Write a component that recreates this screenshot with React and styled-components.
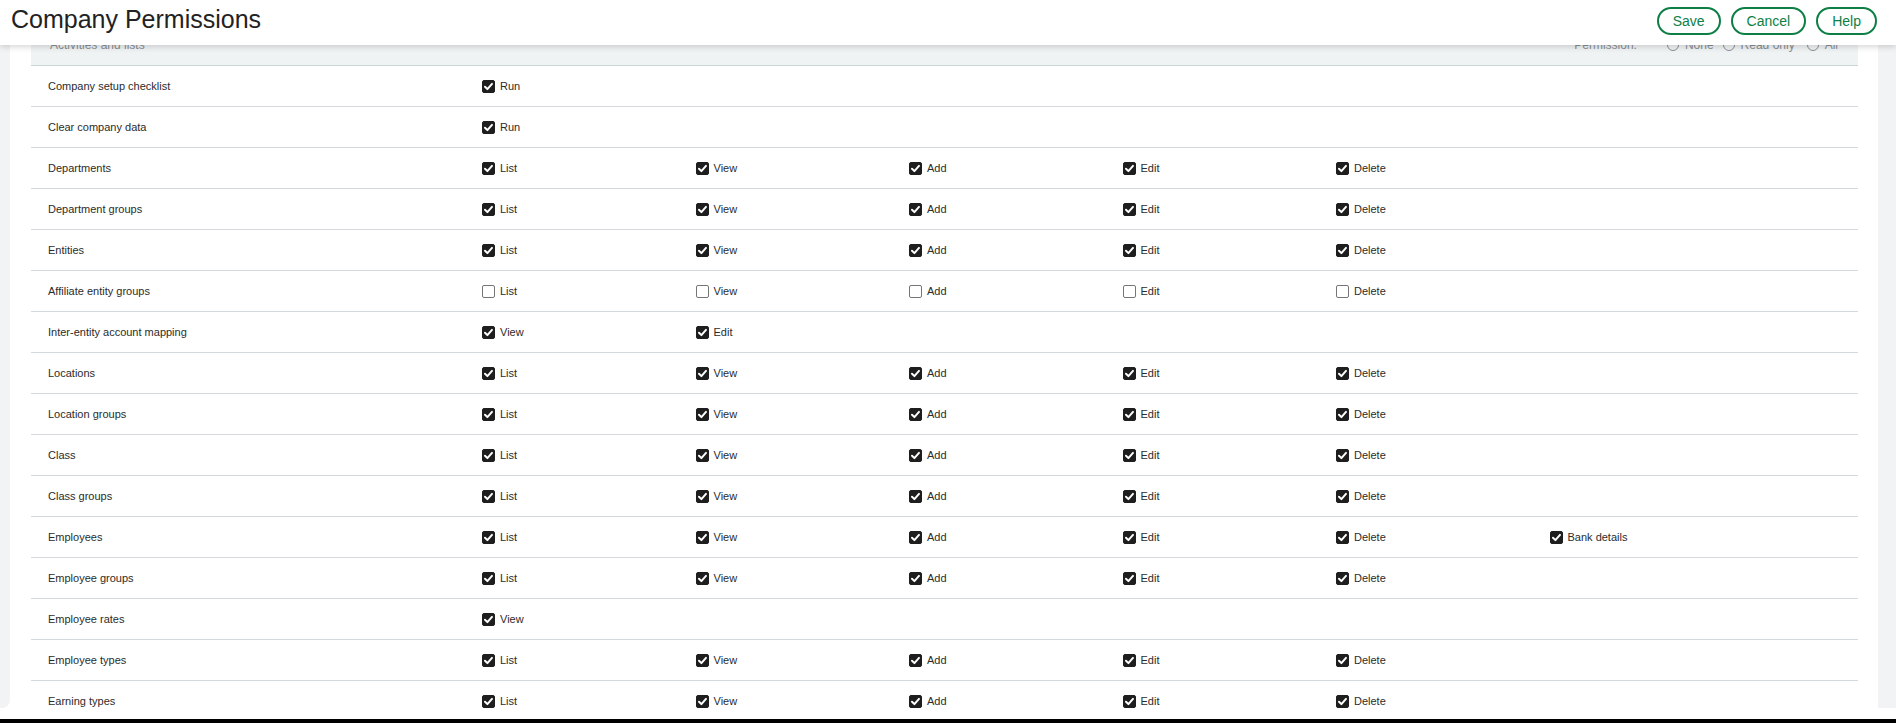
import React from 'react';
import styled, { createGlobalStyle } from 'styled-components';

const GlobalStyle = createGlobalStyle`
  html, body {
    margin: 0;
    padding: 0;
    background: #ffffff;
    font-family: "Liberation Sans", Arial, sans-serif;
  }
`;

const Page = styled.div`
  height: 723px;
  display: flex;
  flex-direction: column;
  overflow: hidden;
`;

const TopBar = styled.header`
  position: relative;
  z-index: 2;
  height: 45px;
  flex-shrink: 0;
  box-sizing: border-box;
  display: flex;
  justify-content: space-between;
  align-items: flex-start;
  padding: 7px 19px 0 11px;
  background: #ffffff;
  box-shadow: 0 2px 6px rgba(0, 0, 0, 0.16);
`;

const Title = styled.h1`
  margin: -2px 0 0;
  font-size: 25px;
  font-weight: 400;
  line-height: 28px;
  color: #222;
`;

const Actions = styled.div`
  display: flex;
  gap: 10px;
`;

const Button = styled.button`
  height: 28px;
  padding: 0 14px;
  border: 2px solid #0d7f45;
  border-radius: 16px;
  background: #ffffff;
  color: #0d7f45;
  font-family: inherit;
  font-size: 14px;
  cursor: pointer;
`;

const Body = styled.div`
  flex: 1;
  min-height: 0;
  display: flex;
  overflow: hidden;
`;

const Gutter = styled.div`
  width: ${(p) => p.w}px;
  height: 663px;
  flex-shrink: 0;
  background: #f1f3f4;
  border-bottom-right-radius: ${(p) => (p.rounded ? '8px' : '0')};
`;

const Card = styled.main`
  flex: 1;
  min-width: 0;
  padding: 0 20px 0 21px;
  overflow: hidden;
`;

const HeadRow = styled.div`
  margin-top: -20px;
  height: 41px;
  box-sizing: border-box;
  display: flex;
  align-items: center;
  justify-content: space-between;
  padding: 0 20px 0 19px;
  background: #f0f3f4;
  border-bottom: 1px solid #cdd4d8;
  color: #8a8f93;
  font-size: 12px;
`;

const HeadRight = styled.div`
  display: flex;
  align-items: center;
`;

const PermLabel = styled.span`
  margin-right: 30px;
`;

const Radio = styled.label`
  display: flex;
  align-items: center;
  gap: 6px;
  margin-left: ${(p) => p.gap || 0}px;
`;

const RadioDot = styled.span`
  width: 10px;
  height: 10px;
  border: 1px solid #8a8f93;
  border-radius: 50%;
`;

const Row = styled.div`
  display: grid;
  grid-template-columns: 434px repeat(6, 213.5px) 1fr;
  height: 41px;
  box-sizing: border-box;
  border-bottom: 1px solid #d3d9dd;
  align-items: center;
  font-size: 11px;
  color: #2b2b2b;
`;

const Name = styled.div`
  padding-left: 17px;
`;

const Perm = styled.label`
  display: flex;
  align-items: center;
  gap: 5px;
  padding-left: 17px;
`;

const Box = styled.span`
  width: 13px;
  height: 13px;
  box-sizing: border-box;
  flex-shrink: 0;
  border-radius: 2px;
  background: ${(p) => (p.on ? '#1e1e1e' : '#ffffff')};
  border: 1px solid ${(p) => (p.on ? '#1e1e1e' : '#767676')};
  display: flex;
  align-items: center;
  justify-content: center;
`;

const BottomEdge = styled.div`
  height: 4px;
  flex-shrink: 0;
  background: #000;
`;

const Check = ({ on }) => (
  <Box on={on}>
    {on && (
      <svg width="11" height="11" viewBox="0 0 11 11">
        <path d="M2 5.8 L4.4 8.1 L9 2.9" fill="none" stroke="#fff" strokeWidth="2" strokeLinecap="round" strokeLinejoin="round" />
      </svg>
    )}
  </Box>
);

const FULL = ['List', 'View', 'Add', 'Edit', 'Delete'];

const rows = [
  { name: 'Company setup checklist', perms: ['Run'] },
  { name: 'Clear company data', perms: ['Run'] },
  { name: 'Departments', perms: FULL },
  { name: 'Department groups', perms: FULL },
  { name: 'Entities', perms: FULL },
  { name: 'Affiliate entity groups', perms: FULL, off: true },
  { name: 'Inter-entity account mapping', perms: ['View', 'Edit'] },
  { name: 'Locations', perms: FULL },
  { name: 'Location groups', perms: FULL },
  { name: 'Class', perms: FULL },
  { name: 'Class groups', perms: FULL },
  { name: 'Employees', perms: [...FULL, 'Bank details'] },
  { name: 'Employee groups', perms: FULL },
  { name: 'Employee rates', perms: ['View'] },
  { name: 'Employee types', perms: FULL },
  { name: 'Earning types', perms: FULL },
];

const App = () => {
  return (
    <Page>
      <GlobalStyle />
      <TopBar>
        <Title>Company Permissions</Title>
        <Actions>
          <Button>Save</Button>
          <Button>Cancel</Button>
          <Button>Help</Button>
        </Actions>
      </TopBar>
      <Body>
        <Gutter w={10} rounded />
        <Card>
          <HeadRow>
            <span>Activities and lists</span>
            <HeadRight>
              <PermLabel>Permission:</PermLabel>
              <Radio><RadioDot />None</Radio>
              <Radio gap={9}><RadioDot />Read only</Radio>
              <Radio gap={12}><RadioDot />All</Radio>
            </HeadRight>
          </HeadRow>
          {rows.map((r) => (
            <Row key={r.name}>
              <Name>{r.name}</Name>
              {r.perms.map((p) => (
                <Perm key={p}>
                  <Check on={!r.off} />
                  {p}
                </Perm>
              ))}
            </Row>
          ))}
        </Card>
        <Gutter w={18} />
      </Body>
      <BottomEdge />
    </Page>
  );
};

export default App;
